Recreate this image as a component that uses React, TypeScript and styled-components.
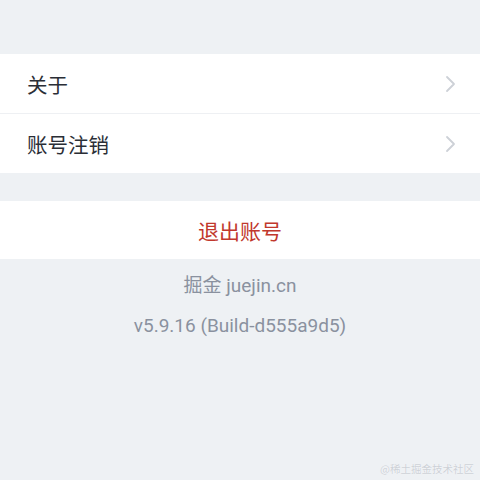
import React from "react";
import styled, { createGlobalStyle } from "styled-components";

const Global = createGlobalStyle`
  html, body { margin: 0; padding: 0; background: #eef1f4; }
  body { font-family: Roboto, "Noto Sans CJK SC", sans-serif; }
`;

const Page = styled.div`
  width: 480px;
  height: 480px;
  background: #eef1f4;
  display: flex;
  flex-direction: column;
  padding-top: 54px;
  box-sizing: border-box;
  position: relative;
  overflow: hidden;
`;

const Group = styled.div<{ $gap?: number }>`
  background: #fff;
  display: flex;
  flex-direction: column;
  margin-bottom: ${(p) => p.$gap ?? 0}px;
`;

const Row = styled.div`
  height: 59px;
  display: flex;
  align-items: center;
  justify-content: space-between;
  padding: 0 24px 0 27px;
  & + & {
    border-top: 1px solid #eef0f3;
  }
`;

const Label = styled.span`
  font-family: "Noto Sans CJK SC", sans-serif;
  font-size: 20.5px;
  color: #2a2e36;
`;

const Logout = styled.div`
  height: 58px;
  display: flex;
  align-items: center;
  justify-content: center;
  font-family: "Noto Sans CJK SC", sans-serif;
  font-size: 21px;
  color: #c1382d;
`;

const Info = styled.div`
  display: flex;
  flex-direction: column;
  align-items: center;
  padding-top: 13px;
  gap: 12px;
`;

const InfoLine = styled.div`
  font-family: Roboto, "Noto Sans CJK SC", sans-serif;
  font-size: 19px;
  line-height: 28px;
  color: #8a919f;
`;

const Watermark = styled.div`
  position: absolute;
  right: 6px;
  bottom: 4px;
  font-family: "Noto Sans CJK SC", sans-serif;
  font-size: 10.5px;
  color: #cdd1d7;
  text-shadow: 0 0 1px #fff;
`;

const Chevron = () => (
  <svg width="12" height="18" viewBox="0 0 12 18" fill="none">
    <path d="M3 2l7 7-7 7" stroke="#cdd1d7" strokeWidth="1.8" strokeLinecap="round" strokeLinejoin="round" />
  </svg>
);

export default function App() {
  return (
    <>
      <Global />
      <Page>
        <Group $gap={28}>
          <Row>
            <Label>关于</Label>
            <Chevron />
          </Row>
          <Row>
            <Label>账号注销</Label>
            <Chevron />
          </Row>
        </Group>
        <Group>
          <Logout>退出账号</Logout>
        </Group>
        <Info>
          <InfoLine>掘金 juejin.cn</InfoLine>
          <InfoLine>v5.9.16 (Build-d555a9d5)</InfoLine>
        </Info>
        <Watermark>@稀土掘金技术社区</Watermark>
      </Page>
    </>
  );
}
